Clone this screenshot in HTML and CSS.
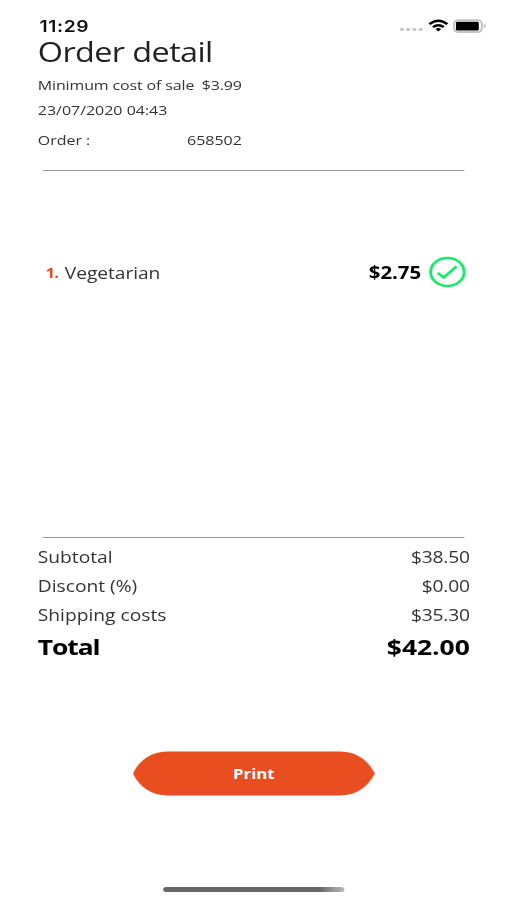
FILE: index.html
```html
<!DOCTYPE html>
<html lang="en">
<head>
<meta charset="utf-8">
<title>Order detail</title>
<link rel="stylesheet" href="styles.css">
</head>
<body>
<main class="screen">
  <header class="status">
    <span class="time">11:29</span>
    <svg class="signals" width="73" height="16" viewBox="0 0 73 16">
      <g fill="#c9c9c9"><circle cx="2" cy="11.5" r="1.8"/><circle cx="7.1" cy="11.5" r="1.8"/><circle cx="12.3" cy="11.5" r="1.8"/><circle cx="17.5" cy="11.5" r="1.8"/></g>
      <g fill="none" stroke="#000" stroke-width="2.3"><path d="M24.8 6.2Q32.3-.8 39.8 6.2"/><path d="M27.8 9.2Q32.3 5.2 36.8 9.2"/></g>
      <path d="M29.9 11Q32.3 9 34.7 11L32.3 13.4Z"/>
      <rect x="45.5" y="2.2" width="23" height="11.8" rx="3.4" fill="#fff" stroke="#c4c4c4" stroke-width="1.8"/>
      <rect x="47" y="3.8" width="19" height="8.6" rx="1.2"/>
      <path d="M70.2 6Q73 8 70.2 10Z" fill="#aaa"/>
    </svg>
  </header>
  <h1 class="title">Order detail</h1>
  <section class="meta">
    <p class="line cost"><span>Minimum cost of sale</span><span>$3.99</span></p>
    <p class="line date">23/07/2020 04:43</p>
    <p class="line number"><span>Order :</span><span>658502</span></p>
  </section>
  <section class="items">
    <div class="item">
      <span class="index">1.</span>
      <span class="name">Vegetarian</span>
      <span class="price">$2.75</span>
      <svg class="check" width="32" height="32" viewBox="0 0 32 32" fill="none" stroke="#1cea6a">
        <circle cx="15.8" cy="16" r="14" stroke-width="2.5"/>
        <path d="M7.8 16.8L12.8 21.4L23.4 10.4" stroke-width="2.5"/>
      </svg>
    </div>
  </section>
  <section class="totals">
    <div class="row"><span>Subtotal</span><span class="amount">$38.50</span></div>
    <div class="row"><span>Discont (%)</span><span class="amount">$0.00</span></div>
    <div class="row"><span>Shipping costs</span><span class="amount">$35.30</span></div>
    <div class="row total"><span class="label">Total</span><span>$42.00</span></div>
  </section>
  <button class="print" type="button">Print</button>
  <div class="home"></div>
</main>
</body>
</html>
```
FILE: styles.css
```css
* { box-sizing: border-box; }
body {
  margin: 0;
  background: #fff;
  overflow: hidden;
}
.screen {
  display: flex;
  flex-direction: column;
  width: 422.5px;
  height: 900px;
  padding: 16px 31px 0 31.5px;
  transform: scaleX(1.2);
  transform-origin: 0 0;
  font-family: "Open Sans", "Noto Sans", sans-serif;
  color: #333;
}
.status {
  display: flex;
  justify-content: space-between;
  height: 20px;
  margin-right: -14.5px;
  padding-left: 1.5px;
}
.time {
  font: 600 16px/20px Inter, sans-serif;
  letter-spacing: .5px;
  color: #111;
}
.signals { margin-top: 2px; }
.title {
  margin: 0;
  height: 32px;
  font-size: 27px;
  font-weight: 400;
  line-height: 31px;
  letter-spacing: -.5px;
  color: #222;
}
.meta {
  height: 103px;
  padding-top: 6px;
  border-bottom: 1.5px solid #999;
  font-size: 13.3px;
  margin: 0 4.5px;
}
.line {
  display: flex;
  justify-content: space-between;
  width: 170px;
  margin: 0 0 0 -4.5px;
  height: 25px;
  line-height: 22px;
}
.cost { letter-spacing: -.1px; }
.number { margin-top: 5px; }
.items {
  height: 366px;
  margin: 0 4.5px;
  padding-top: 85px;
}
.item {
  display: flex;
  align-items: center;
  height: 32px;
  font-size: 16px;
  margin-right: -2px;
}
.index {
  width: 18px;
  padding-left: 2px;
  font-size: 14px;
  font-weight: 700;
  letter-spacing: -.8px;
  color: #e84c20;
}
.name {
  flex: 1;
  padding-top: 2px;
  letter-spacing: -.05px;
}
.price {
  margin-right: 6px;
  padding-top: 1px;
  font-weight: 700;
  font-size: 17px;
  color: #000;
}
.totals {
  height: 214px;
  font-size: 16px;
}
.totals::before {
  content: "";
  display: block;
  margin: 0 4.5px 5px;
  height: 1px;
  background: #999;
}
.row {
  display: flex;
  justify-content: space-between;
  height: 29px;
  line-height: 29px;
}
.amount { letter-spacing: -.15px; }
.total {
  height: 36px;
  line-height: 33px;
  font-size: 22px;
  font-weight: 700;
  color: #000;
}
.label { letter-spacing: -.9px; }
.print {
  align-self: center;
  width: 202px;
  height: 45px;
  padding: 0;
  border: 0;
  background: #e84e20;
  clip-path: path("M.8 24C0 22.8 0 22.2 .8 21C6 9 16 .5 29 .5H173C186 .5 196 9 201.2 21C202 22.2 202 22.8 201.2 24C196 36 186 44.5 173 44.5H29C16 44.5 6 36 .8 24Z");
  color: #fff;
  font: 700 14px/45px "Open Sans", sans-serif;
}
.home {
  align-self: center;
  width: 151px;
  height: 5px;
  margin-top: 91px;
  border-radius: 3px;
  background: linear-gradient(90deg, #666 86%, #bbb);
}
```
